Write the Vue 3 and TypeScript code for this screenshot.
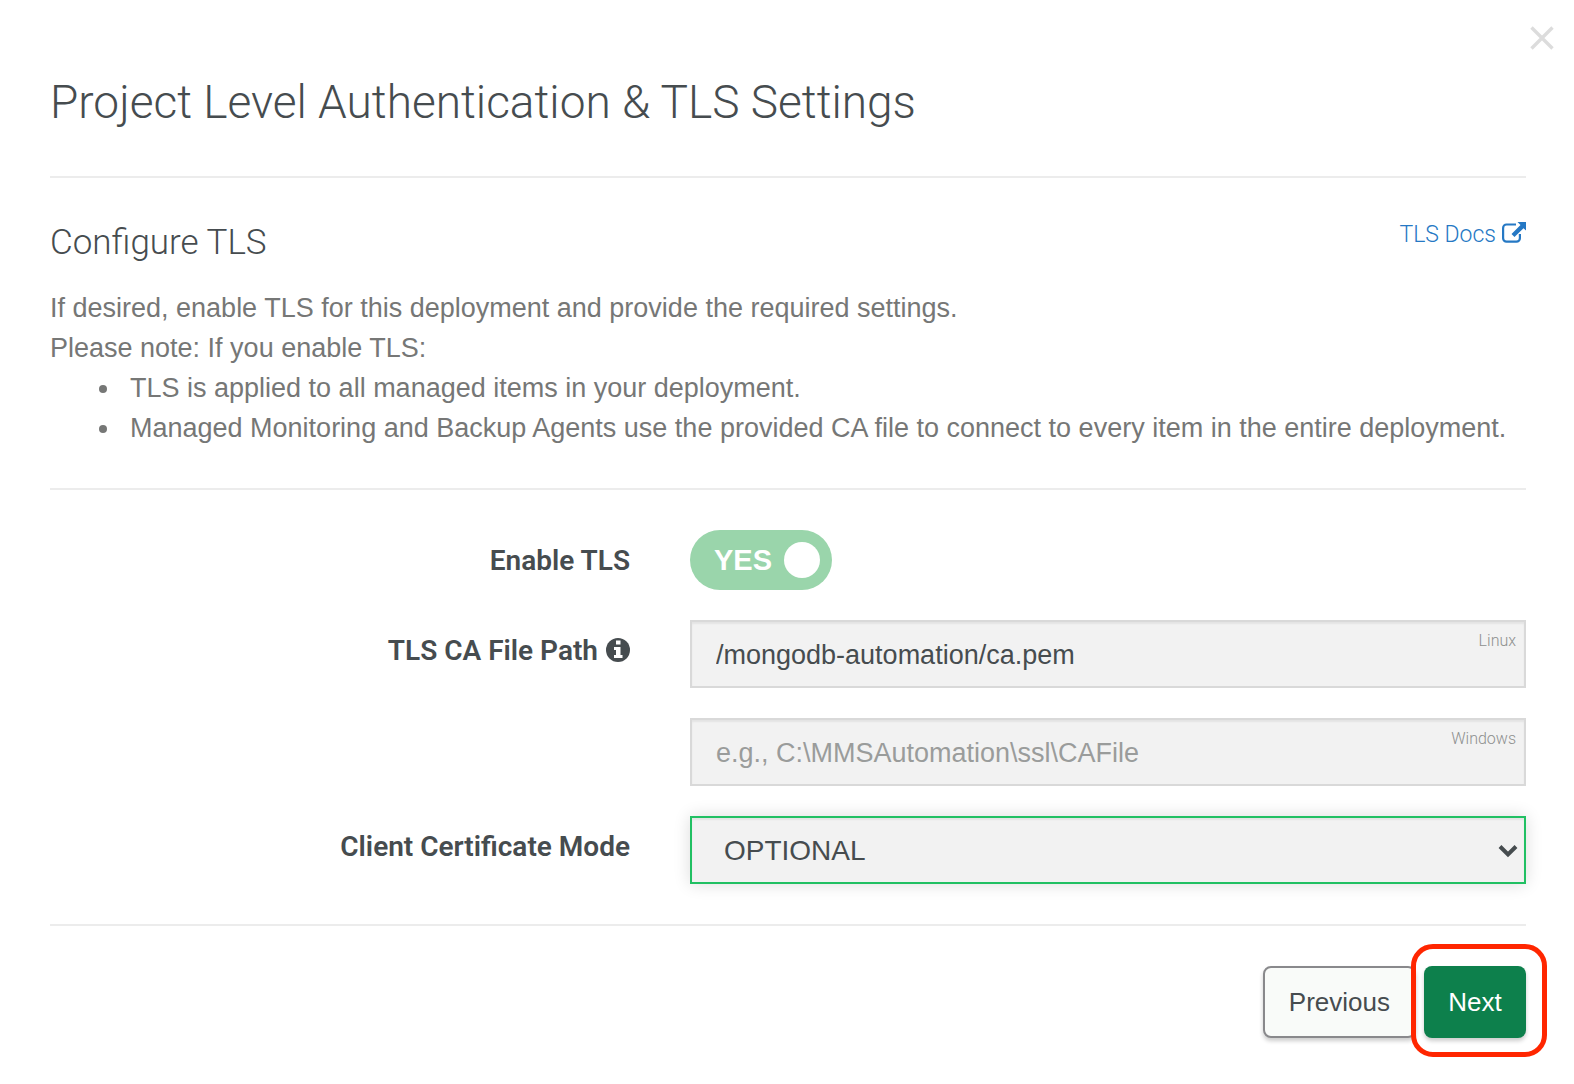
<script setup lang="ts">
import { ref } from 'vue'

const notes: string[] = [
  'TLS is applied to all managed items in your deployment.',
  'Managed Monitoring and Backup Agents use the provided CA file to connect to every item in the entire deployment.',
]

const certificateModes: string[] = ['OPTIONAL', 'REQUIRED']

const tlsEnabled = ref(true)
const linuxPath = ref('/mongodb-automation/ca.pem')
const windowsPath = ref('')
const certificateMode = ref('OPTIONAL')
</script>

<template>
  <main class="dialog">
    <button class="close" type="button" aria-label="Close">
      <svg viewBox="0 0 24 24" width="24" height="24" aria-hidden="true">
        <path d="M1.5 1.5 22.5 22.5M22.5 1.5 1.5 22.5" fill="none" stroke="currentColor" stroke-width="3.4" />
      </svg>
    </button>

    <header class="dialog-header">
      <h1>Project Level Authentication &amp; TLS Settings</h1>
    </header>

    <section class="intro">
      <div class="intro-heading">
        <h2>Configure TLS</h2>
        <a class="docs" href="#tls-docs">
          TLS Docs
          <svg viewBox="0 0 24 21" width="24" height="21" aria-hidden="true">
            <path
              d="M14 2.500H4.500A3.400 3.400 0 0 0 1.100 5.900V16.300A3.400 3.400 0 0 0 4.500 19.700H14.500A3.400 3.400 0 0 0 17.900 16.300V12"
              fill="none"
              stroke="currentColor"
              stroke-width="2.2"
            />
            <path d="M15.500 0H24V8.500L21.500 6.200 12.500 15 9.500 12 18.500 3Z" fill="currentColor" />
          </svg>
        </a>
      </div>
      <p>If desired, enable TLS for this deployment and provide the required settings.</p>
      <p>Please note: If you enable TLS:</p>
      <ul>
        <li v-for="note in notes" :key="note">{{ note }}</li>
      </ul>
    </section>

    <form class="settings" @submit.prevent>
      <label class="name" for="enable-tls">Enable TLS</label>
      <label class="toggle">
        <input id="enable-tls" v-model="tlsEnabled" type="checkbox" role="switch" />
        <span>{{ tlsEnabled ? 'YES' : 'NO' }}</span>
        <i class="knob"></i>
      </label>

      <label class="name" for="linux-path">
        TLS CA File Path
        <svg viewBox="0 0 24 24" width="24" height="24" aria-hidden="true">
          <circle cx="12" cy="12" r="12" fill="currentColor" />
          <path d="M10 2.500h4.500v4H10zM8 9h6.500v8H16.500v3H8v-3h2v-5H8z" fill="#fff" />
        </svg>
      </label>
      <div class="paths">
        <div class="field">
          <input id="linux-path" v-model="linuxPath" type="text" />
          <label class="platform" for="linux-path">Linux</label>
        </div>
        <div class="field">
          <input
            id="windows-path"
            v-model="windowsPath"
            type="text"
            placeholder="e.g., C:\MMSAutomation\ssl\CAFile"
          />
          <label class="platform" for="windows-path">Windows</label>
        </div>
      </div>

      <label class="name" for="certificate-mode">Client Certificate Mode</label>
      <div class="field">
        <select id="certificate-mode" v-model="certificateMode">
          <option v-for="mode in certificateModes" :key="mode">{{ mode }}</option>
        </select>
        <svg class="chevron" viewBox="0 0 20 14" width="20" height="14" aria-hidden="true">
          <path d="M2 2.500 10 10.500 18 2.500" fill="none" stroke="currentColor" stroke-width="4" />
        </svg>
      </div>
    </form>

    <footer class="actions">
      <button class="previous" type="button">Previous</button>
      <div class="highlighted">
        <button class="next" type="button">Next</button>
      </div>
    </footer>
  </main>
</template>

<style>
body {
  margin: 0;
  background: #fff;
}
</style>

<style scoped>
.dialog {
  position: relative;
  box-sizing: border-box;
  padding: 72px 48px 46px 50px;
  color: #464c4f;
  font-family: "Liberation Sans", Arial, sans-serif;
  font-size: 27px;
  line-height: 40px;
}

.close {
  position: absolute;
  top: 26px;
  right: 20px;
  display: flex;
  padding: 0;
  border: 0;
  background: none;
  color: #dcdcdc;
}

.dialog-header {
  padding-bottom: 44px;
  border-bottom: 2px solid #ececec;
}

h1,
h2,
.docs,
.name,
.platform {
  font-family: Roboto, "Liberation Sans", sans-serif;
}

h1 {
  margin: 0;
  font-size: 46px;
  font-weight: 300;
  line-height: 60px;
}

.intro {
  padding: 40px 0;
  border-bottom: 2px solid #ececec;
}

.intro-heading {
  display: flex;
  justify-content: space-between;
  align-items: flex-start;
  margin-bottom: 20px;
}

h2 {
  margin: 0;
  font-size: 35px;
  font-weight: 300;
  line-height: 50px;
}

.docs {
  display: flex;
  gap: 6px;
  color: #2578c4;
  font-size: 23px;
  font-weight: 300;
  line-height: 34px;
  text-decoration: none;
}

.docs svg {
  margin-top: 4px;
}

.intro p {
  margin: 0;
  color: #767776;
}

.intro ul {
  margin: 0;
  padding-left: 72px;
  color: #767776;
}

.intro li {
  padding-left: 8px;
}

.settings {
  display: grid;
  grid-template-columns: 580fr 836fr;
  gap: 30px 60px;
  padding: 40px 0;
  border-bottom: 2px solid #ececec;
}

.name {
  display: flex;
  justify-content: flex-end;
  gap: 8px;
  padding-top: 11px;
  font-size: 28px;
  font-weight: 600;
}

.name svg {
  margin-top: 7px;
}

.toggle {
  position: relative;
  display: flex;
  justify-self: start;
  align-items: center;
  gap: 12px;
  box-sizing: border-box;
  height: 60px;
  padding: 0 12px 0 24px;
  border-radius: 30px;
  background: #9ad5ab;
  color: #fff;
  font-size: 29px;
  font-weight: 700;
}

.toggle input {
  position: absolute;
  inset: 0;
  width: 100%;
  height: 100%;
  margin: 0;
  opacity: 0;
}

.knob {
  width: 36px;
  height: 36px;
  border-radius: 50%;
  background: #fff;
}

.paths {
  display: grid;
  gap: 30px;
}

.field {
  position: relative;
}

.field input,
.field select {
  display: block;
  box-sizing: border-box;
  width: 100%;
  height: 68px;
  padding: 2px 24px 0;
  border: 2px solid #d9d9d9;
  border-radius: 0;
  outline: 0;
  background: #f2f2f2;
  box-shadow: inset 0 2px 2px rgba(0, 0, 0, 0.06);
  color: #464c4f;
  font-family: inherit;
  font-size: 27px;
}

.field input::placeholder {
  color: #9a9c9b;
  opacity: 1;
}

.field select {
  appearance: none;
  padding: 0 32px;
  border-color: #21c063;
  box-shadow: inset 0 2px 2px rgba(0, 0, 0, 0.06), 0 0 16px rgba(0, 0, 0, 0.14);
  font-size: 28px;
}

.platform {
  position: absolute;
  top: 11px;
  right: 10px;
  color: #8e908f;
  font-size: 16px;
  font-weight: 300;
  line-height: 20px;
}

.chevron {
  position: absolute;
  top: 28px;
  right: 8px;
  pointer-events: none;
}

.actions {
  display: flex;
  justify-content: flex-end;
  gap: 8px;
  padding-top: 40px;
}

.actions button {
  display: block;
  box-sizing: border-box;
  height: 72px;
  padding: 0 24px;
  border: 2px solid #89898c;
  border-radius: 8px;
  background: #f9fbf9;
  box-shadow: 0 3px 4px rgba(0, 0, 0, 0.2);
  color: #464c4f;
  font-family: inherit;
  font-size: 26px;
}

.highlighted {
  position: relative;
}

.highlighted::after {
  content: "";
  position: absolute;
  inset: -22px -21px -19px -13px;
  border: 5px solid #ff2600;
  border-radius: 22px;
  pointer-events: none;
}

.actions .next {
  min-width: 102px;
  border: 0;
  background: #0d804c;
  color: #fff;
}
</style>
